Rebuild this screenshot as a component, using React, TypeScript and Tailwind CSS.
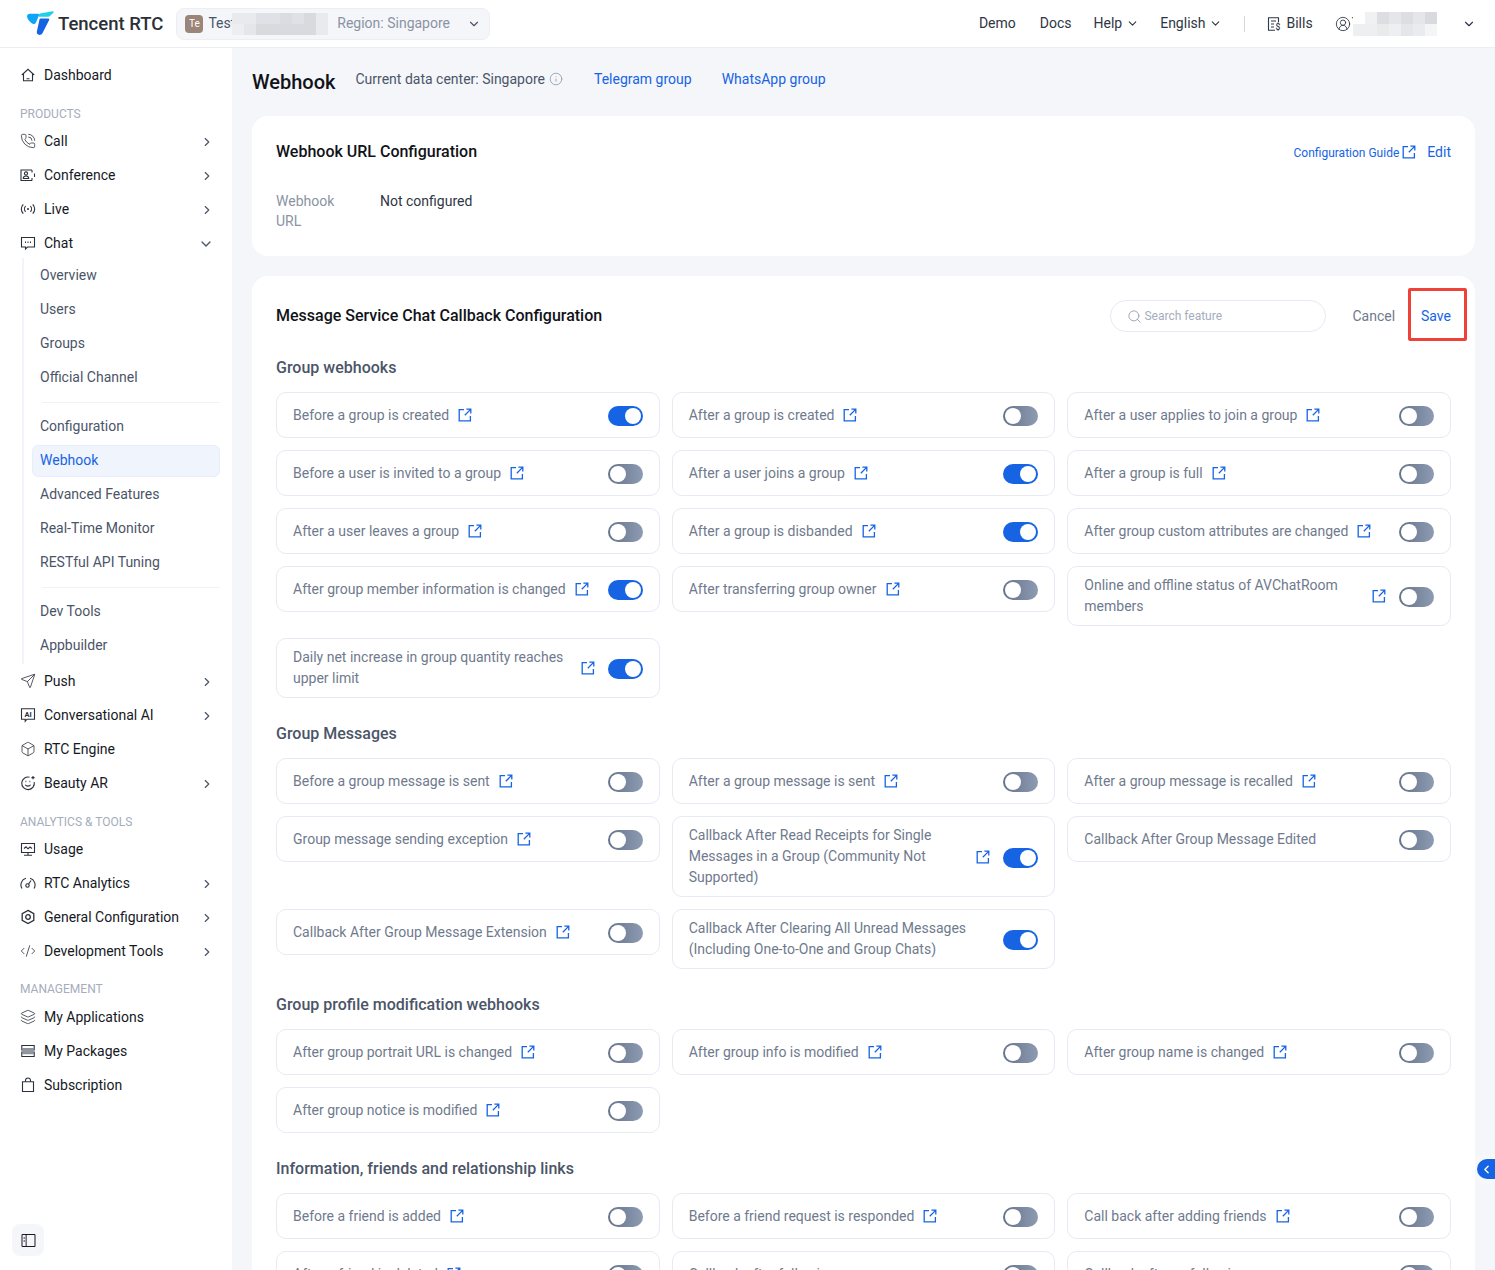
import React from "react";
import { ChevronDown, ChevronRight, ChevronLeft, Search, Info, PhoneCall, Send, Box, CodeXml, Layers, CircleUserRound } from "lucide-react";

const Svg = ({ children }: any) => (
  <svg viewBox="0 0 16 16" fill="none" stroke="currentColor" strokeWidth="1.1" className="w-4 h-4 shrink-0">
    {children}
  </svg>
);

const HomeIcon = () => (
  <Svg>
    <path d="M1.800 8 8 2.300 14.200 8M3.500 6.800v7h9v-7M6.500 11.800h3" />
  </Svg>
);
const ConferenceIcon = () => (
  <Svg>
    <path d="M12 3H1v10.500h11M12 3v2.500M12 11v2.500" />
    <circle cx="6" cy="6.500" r="1.600" />
    <path d="M3.300 11.500c0-3.300 5.400-3.300 5.400 0ZM14.500 6.500v3.500" />
  </Svg>
);
const LiveIcon = () => (
  <Svg>
    <circle cx="8" cy="8" r="1" fill="currentColor" stroke="none" />
    <path d="M5.600 5.200a4 4 0 0 0 0 5.600M10.400 5.200a4 4 0 0 1 0 5.600M3.300 3.300a6.600 6.600 0 0 0 0 9.400M12.700 3.300a6.600 6.600 0 0 1 0 9.400" />
  </Svg>
);
const ChatIcon = () => (
  <Svg>
    <path d="M1.500 2.500h13v9.500H7.500l-2 2v-2h-4Z" />
    <path d="M5 7.200h1M7.500 7.200h1M10 7.200h1" strokeWidth="1.400" />
  </Svg>
);
const AiIcon = () => (
  <Svg>
    <path d="M1.500 1.800h13v10.400H7l-1.800 2v-2H1.500Z" />
    <text x="8" y="10" textAnchor="middle" fontSize="7.500" fontWeight="700" fill="currentColor" stroke="none">AI</text>
  </Svg>
);
const BeautyIcon = () => (
  <Svg>
    <path d="M9.500 2.200A6.300 6.300 0 1 0 14.200 7" />
    <path d="M5.200 9.800c1.300 1.800 4.100 1.800 5.400 0" />
    <path d="M5.500 6.500h.8M9.500 6.500h.8" strokeWidth="1.300" />
    <path d="M13 1v3.200M11.400 2.600h3.200" />
  </Svg>
);
const UsageIcon = () => (
  <Svg>
    <path d="M1.500 2.500h13v9h-13ZM4 14.200h8M8 11.500v2.700" />
    <path d="M4 7.500 6 5.800l2 2 2-1.800 2 1.500" />
  </Svg>
);
const GaugeIcon = () => (
  <Svg>
    <path d="M2 13.500a6.800 6.800 0 0 1 4-10.200M10 3.300a6.800 6.800 0 0 1 4 10.200" />
    <circle cx="7.500" cy="10.500" r="1.700" />
    <path d="M8.500 9.200 11 5.500" />
  </Svg>
);
const ConfigIcon = () => (
  <Svg>
    <path d="M8 1.400 13.800 4.700v6.600L8 14.600 2.200 11.300V4.700Z" strokeWidth="1.300" />
    <circle cx="8" cy="8" r="2.300" strokeWidth="1.300" />
  </Svg>
);
const PackageIcon = () => (
  <Svg>
    <path d="M1.800 2.500h12.400v4.500H1.800ZM1.800 9h12.400v4.500H1.800Z" />
    <path d="M2 5.800h12M2 10.300h12" strokeWidth="1.800" stroke="#8b93a3" />
  </Svg>
);
const BagIcon = () => (
  <Svg>
    <path d="M2.500 4.800h11v9.700h-11Z" />
    <path d="M5.500 4.800V3.500a2.500 2.500 0 0 1 5 0v1.300" />
  </Svg>
);
const BillIcon = () => (
  <Svg>
    <path d="M12.500 6V1.800h-10v12.400h6.500M5 5h5M5 8h3M5 11h3" />
    <text x="12" y="14" textAnchor="middle" fontSize="8.500" fontWeight="500" fill="currentColor" stroke="none">$</text>
  </Svg>
);
const SidebarIcon = () => (
  <svg viewBox="0 0 15 15" fill="none" stroke="#16191f" strokeWidth="1" className="w-[15px] h-[15px]">
    <path d="M1 1.500h13v12H1ZM5.500 1.500v12" />
    <path d="M2.500 5h1.500M2.500 8h1.500" />
    <path d="M5 2v11" stroke="#8b93a3" strokeWidth="1.500" />
  </svg>
);

const LinkIcon = ({ className = "" }: any) => (
  <svg viewBox="0 0 14 14" fill="none" stroke="#1664e4" strokeWidth="1.3" className={`w-[14px] h-[14px] shrink-0 ${className}`}>
    <path d="M6 1.600H1.200v11.200h11.200V8" />
    <path d="M8.400 1.200h4.400v4.400M12.600 1.400 6.800 7.200" />
  </svg>
);

const Toggle = ({ on }: any) => (
  <div className={`ml-auto mt-[2px] shrink-0 w-[35px] h-5 rounded-full flex items-center px-[2px] ${on ? "bg-[#1664e4] justify-end" : "bg-gradient-to-r from-[#66738a] to-[#8d9bb3] justify-start"}`}>
    <div className="w-4 h-4 rounded-full bg-white" />
  </div>
);

const Hook = ({ text, on, noLink }: any) => (
  <div className="flex items-center min-h-[46px] py-2 pl-4 pr-4 bg-white border border-[#e7eaf3] rounded-[10px] self-start text-[14px] leading-[21px] text-[#6f7a8d]">
    <span className={`min-w-0 ${noLink ? "mr-[13px]" : ""}`}>{text}</span>
    {!noLink && <LinkIcon className="ml-[9px] mr-[13px]" />}
    <Toggle on={on} />
  </div>
);

const Section = ({ title, items, className = "" }: any) => (
  <section className={className}>
    <h3 className="text-[16px] leading-[24px] font-medium text-[#4b5568]">{title}</h3>
    <div className="grid grid-cols-3 gap-3 mt-3">
      {items.map((it: any) => (
        <Hook key={it[0]} text={it[0]} on={it[1]} noLink={it[2]} />
      ))}
    </div>
  </section>
);

const groupHooks = [
  ["Before a group is created", true],
  ["After a group is created", false],
  ["After a user applies to join a group", false],
  ["Before a user is invited to a group", false],
  ["After a user joins a group", true],
  ["After a group is full", false],
  ["After a user leaves a group", false],
  ["After a group is disbanded", true],
  ["After group custom attributes are changed", false],
  ["After group member information is changed", true],
  ["After transferring group owner", false],
  ["Online and offline status of AVChatRoom members", false],
  ["Daily net increase in group quantity reaches upper limit", true],
];

const groupMessages = [
  ["Before a group message is sent", false],
  ["After a group message is sent", false],
  ["After a group message is recalled", false],
  ["Group message sending exception", false],
  ["Callback After Read Receipts for Single Messages in a Group (Community Not Supported)", true],
  ["Callback After Group Message Edited", false, true],
  ["Callback After Group Message Extension", false],
  ["Callback After Clearing All Unread Messages (Including One-to-One and Group Chats)", true, true],
];

const groupProfile = [
  ["After group portrait URL is changed", false],
  ["After group info is modified", false],
  ["After group name is changed", false],
  ["After group notice is modified", false],
];

const friends = [
  ["Before a friend is added", false],
  ["Before a friend request is responded", false],
  ["Call back after adding friends", false],
  ["After a friend is deleted", false],
  ["Callback after following", false, true],
  ["Callback after unfollowing", false, true],
];

const NavItem = ({ icon, label, arrow, open }: any) => (
  <div className="flex items-center h-[34px] pl-5 pr-[18px] text-[14px] text-[#16191f]">
    <span className="text-[#2b303b] flex">{icon}</span>
    <span className="ml-2">{label}</span>
    {arrow && <ChevronRight size={14} strokeWidth={2} className="ml-auto mt-[2px] text-[#4b5568]" />}
    {open && <ChevronDown size={16} strokeWidth={2} className="ml-auto mt-[2px] text-[#4b5568]" />}
  </div>
);

const NavLabel = ({ children, className = "" }: any) => (
  <div className={`pl-5 text-[12px] leading-[18px] text-[#a5adbd] ${className}`}>{children}</div>
);

const SubItem = ({ label, active }: any) =>
  active ? (
    <div className="flex items-center h-8 mt-[2px] ml-[8px] pl-[7px] pb-[2px] rounded-md bg-[#f0f4fd] border border-[#e8eefb] text-[14px] text-[#1664e4]">
      {label}
    </div>
  ) : (
    <div className="flex items-center h-[34px] pl-[16px] text-[14px] text-[#4b5568]">{label}</div>
  );

const Mosaic = ({ cells, cellClass, className = "" }: any) => (
  <div className={`grid grid-cols-[repeat(8,12px)] shrink-0 ${className}`}>
    {cells.map((c: string, i: number) => (
      <div key={i} className={cellClass} style={{ background: c }} />
    ))}
  </div>
);

const Logo = () => (
  <svg viewBox="0 0 28 26" className="w-[27px] h-[25px] shrink-0">
    <path d="M0 5.500c0-1.600 1.200-2.600 2.800-2.600H11.500c1 0 1.400 1 .9 1.800L9.200 12.200c-1 1.600-3 1.700-4.400.6C2 10.500 0 8 0 5.500Z" fill="#0ea5f8" />
    <path d="M13.500 2.600 26.500 0.300c1.200-.2 1.600 1 .7 1.800l-3.400 3.200c-.5.4-1.100.6-1.800.6H13c-1 0-1.200-2.100.5-3.300Z" fill="#1fd0e8" />
    <path d="M14 7.700h8.200c1 0 1.200.9.8 1.700l-7 13.700c-1 2-4 2.300-5.200.9-.8-1-.8-2.200-.4-3.400L13 8.600c.1-.6.500-.9 1-.9Z" fill="#1664e4" />
  </svg>
);

const App = () => {
  return (
    <div className="h-[1270px] w-full overflow-hidden flex flex-col bg-[#f4f6fa] text-[14px]" style={{ fontFamily: "Roboto, sans-serif" }}>
      <header className="h-[48px] shrink-0 bg-white border-b border-[#eceef4] flex items-center pl-[27px] pr-[19px]">
        <Logo />
        <span className="ml-[4px] mt-[3px] text-[18.500px] font-medium text-[#2b2f38]">Tencent RTC</span>
        <div className="ml-[13px] flex items-center w-[314px] h-8 pl-2 pr-2 rounded-lg bg-[#f4f6fa] border border-[#eceef4]">
          <div className="w-[18px] h-[18px] rounded-[4px] bg-[#9b8579] text-white text-[10px] flex items-center justify-center">Te</div>
          <span className="ml-[5px] whitespace-nowrap text-[#4b5568]">Test</span>
          <Mosaic
            cellClass="h-[11px]"
            cells={["#e8eaee", "#e8eaee", "#dfe1e6", "#dfe1e6", "#d9dde0", "#dfe1e6", "#d8dade", "#e8eaee", "#eceef1", "#e4e6ea", "#d8dade", "#d8dade", "#d8dade", "#d8dade", "#d8dade", "#e8eaee"]}
            className="-ml-[3px]"
          />
          <span className="ml-[9px] text-[#8b93a3] whitespace-nowrap">Region: Singapore</span>
          <ChevronDown size={14} strokeWidth={2} className="ml-auto text-[#4b5568]" />
        </div>
        <nav className="ml-auto flex items-center text-[#2f3644]">
          <span>Demo</span>
          <span className="ml-6">Docs</span>
          <span className="ml-[22px]">Help</span>
          <ChevronDown size={13} strokeWidth={2} className="ml-1" />
          <span className="ml-[21px]">English</span>
          <ChevronDown size={13} strokeWidth={2} className="ml-1" />
          <div className="ml-[22px] w-px h-4 bg-[#d5d8df]" />
          <span className="ml-[21px] flex"><BillIcon /></span>
          <span className="ml-1">Bills</span>
          <CircleUserRound size={16} strokeWidth={1.3} className="ml-[22px]" />
          <span className="ml-[1px]">T</span>
          <Mosaic
            cellClass="h-3"
            cells={["#ffffff", "#f0f1f3", "#dcdee2", "#e4e6e9", "#dcdee2", "#e4e6e9", "#d8dade", "#ffffff", "#eeeff1", "#eeeff1", "#e8eaec", "#eeeff1", "#e4e6e9", "#eaebee", "#f4f5f6", "#ffffff"]}
            className="-ml-[7px]"
          />
          <ChevronDown size={14} strokeWidth={2} className="ml-[13px]" />
        </nav>
      </header>

      <div className="flex-1 flex min-h-0">
        <aside className="relative w-[232px] shrink-0 bg-white pt-[10px]">
          <NavItem icon={<HomeIcon />} label="Dashboard" />
          <NavLabel className="mt-[13px] mb-[1px]">PRODUCTS</NavLabel>
          <NavItem icon={<PhoneCall size={16} strokeWidth={1.2} />} label="Call" arrow />
          <NavItem icon={<ConferenceIcon />} label="Conference" arrow />
          <NavItem icon={<LiveIcon />} label="Live" arrow />
          <NavItem icon={<ChatIcon />} label="Chat" open />
          <div className="ml-[22px] mr-3 -mt-[2px] border-l-2 border-[#f2f4f9] pb-[2px]">
            <SubItem label="Overview" />
            <SubItem label="Users" />
            <SubItem label="Groups" />
            <SubItem label="Official Channel" />
            <div className="h-px bg-[#f0f2f7] ml-[18px] mt-2 mb-[6px]" />
            <SubItem label="Configuration" />
            <SubItem label="Webhook" active />
            <SubItem label="Advanced Features" />
            <SubItem label="Real-Time Monitor" />
            <SubItem label="RESTful API Tuning" />
            <div className="h-px bg-[#f0f2f7] ml-[18px] mt-2 mb-[6px]" />
            <SubItem label="Dev Tools" />
            <SubItem label="Appbuilder" />
          </div>
          <NavItem icon={<Send size={16} strokeWidth={1.2} />} label="Push" arrow />
          <NavItem icon={<AiIcon />} label="Conversational AI" arrow />
          <NavItem icon={<Box size={16} strokeWidth={1.2} />} label="RTC Engine" />
          <NavItem icon={<BeautyIcon />} label="Beauty AR" arrow />
          <NavLabel className="mt-[13px] mb-[1px]">ANALYTICS &amp; TOOLS</NavLabel>
          <NavItem icon={<UsageIcon />} label="Usage" />
          <NavItem icon={<GaugeIcon />} label="RTC Analytics" arrow />
          <NavItem icon={<ConfigIcon />} label="General Configuration" arrow />
          <NavItem icon={<CodeXml size={16} strokeWidth={1.2} />} label="Development Tools" arrow />
          <NavLabel className="mt-[12px] mb-[2px]">MANAGEMENT</NavLabel>
          <NavItem icon={<Layers size={16} strokeWidth={1.2} />} label="My Applications" />
          <NavItem icon={<PackageIcon />} label="My Packages" />
          <NavItem icon={<BagIcon />} label="Subscription" />
          <div className="absolute left-3 bottom-[14px] w-8 h-8 rounded-lg bg-[#f4f6fa] flex items-center justify-center">
            <SidebarIcon />
          </div>
        </aside>

        <main className="relative flex-1 min-w-0 pl-5 pr-5">
          <div className="flex items-center h-[68px]">
            <h1 className="text-[20px] font-medium text-[#111318]">Webhook</h1>
            <div className="flex items-center mb-[6px]">
              <span className="ml-5 text-[#4b5568]">Current data center: Singapore</span>
              <Info size={14} strokeWidth={1.3} className="ml-[4px] text-[#8b93a3]" />
              <a className="ml-[31px] text-[#1664e4]">Telegram group</a>
              <a className="ml-[30px] text-[#1664e4]">WhatsApp group</a>
            </div>
          </div>

          <section className="bg-white rounded-2xl h-[140px] px-6 pt-[25px]">
            <div className="flex items-center">
              <h2 className="text-[16px] leading-[22px] font-medium text-[#111318]">Webhook URL Configuration</h2>
              <a className="ml-auto mt-[2px] text-[12px] text-[#1664e4]">Configuration Guide</a>
              <LinkIcon className="ml-[3px]" />
              <a className="ml-[11px] text-[#1664e4]">Edit</a>
            </div>
            <div className="flex mt-[28px] leading-5">
              <div className="w-[104px] text-[#8b93a3]">Webhook<br />URL</div>
              <div className="text-[#2f3644]">Not configured</div>
            </div>
          </section>

          <section className="bg-white rounded-2xl mt-5 px-6 pt-4 h-[1100px]">
            <div className="flex items-center h-[48px]">
              <h2 className="text-[16px] font-medium text-[#111318]">Message Service Chat Callback Configuration</h2>
              <div className="ml-auto flex items-center w-[216px] h-8 pl-4 rounded-full border border-[#e7eaf3] text-[12px] text-[#a5adbd]">
                <Search size={15} strokeWidth={1.3} className="text-[#8b93a3] mr-[2px]" />
                Search feature
              </div>
              <span className="ml-[26px] text-[#6f7a8d]">Cancel</span>
              <span className="ml-[13px] -mr-4 mb-1 flex items-center h-[53px] pt-1 pl-[10px] pr-[13px] border-[3px] border-[#ee4137] rounded-[2px] text-[#1664e4]">Save</span>
            </div>
            <Section title="Group webhooks" items={groupHooks} className="mt-4" />
            <Section title="Group Messages" items={groupMessages} className="mt-6" />
            <Section title="Group profile modification webhooks" items={groupProfile} className="mt-6" />
            <Section title="Information, friends and relationship links" items={friends} className="mt-6" />
          </section>

          <div className="absolute right-0 top-[1111px] w-[18px] h-5 rounded-l-full bg-[#1664e4] shadow-[0_0_12px_rgba(255,255,255,0.9)] flex items-center justify-center">
            <ChevronLeft size={13} strokeWidth={2.5} className="text-white" />
          </div>
        </main>
      </div>
    </div>
  );
};

export default App;
